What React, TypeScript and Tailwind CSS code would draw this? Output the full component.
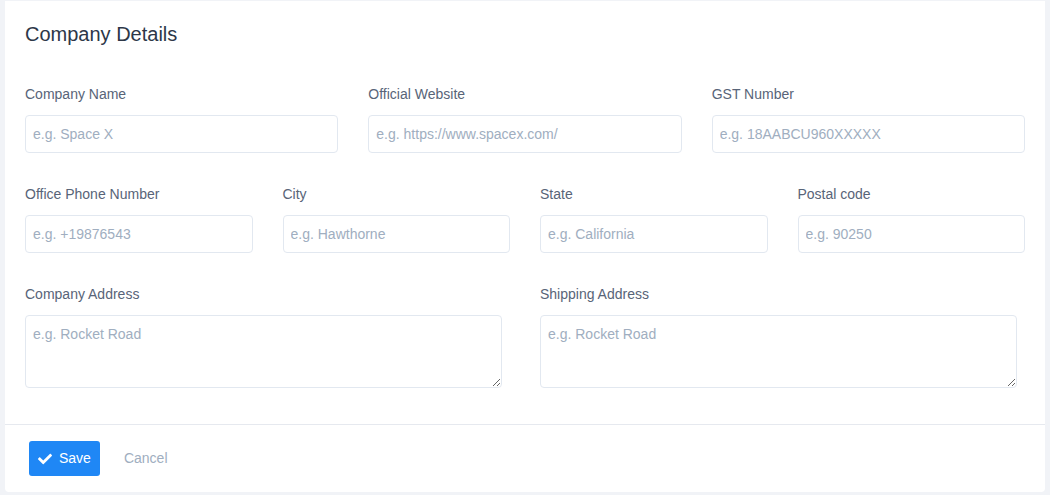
import { FaCheck } from "react-icons/fa";

const inputCls =
  "block h-[38px] w-full rounded-[4px] border border-[#e2e8f0] bg-white px-[7px] text-[14px] text-[#2d3748] placeholder:text-[#a0aec0] outline-none";

function Field({ label, placeholder }: { label: string; placeholder: string }) {
  return (
    <div>
      <label className="mb-[10px] block text-[14px] leading-[21px] text-[#586478]">{label}</label>
      <input className={inputCls} placeholder={placeholder} />
    </div>
  );
}

function AreaField({ label, placeholder }: { label: string; placeholder: string }) {
  return (
    <div>
      <label className="mb-[10px] block text-[14px] leading-[21px] text-[#586478]">{label}</label>
      <textarea
        className="block h-[73px] w-[calc(100%-8px)] rounded-[4px] border border-[#e2e8f0] bg-white px-[7px] py-[8px] text-[14px] leading-[20px] text-[#2d3748] placeholder:text-[#a0aec0] outline-none"
        placeholder={placeholder}
      />
    </div>
  );
}

export default function App() {
  return (
    <div
      className="h-[495px] w-[1050px] bg-[#f1f3f7] pt-px pl-[5px] pr-[5px]"
      style={{ fontFamily: '"Liberation Sans", Arial, sans-serif' }}
    >
      <div className="h-[491px] rounded-b-[4px] bg-white">
        <div className="px-5 pt-[19px] pb-[36px]">
          <h2 className="text-[20px] leading-[28px] text-[#2d3748]">Company Details</h2>
          <div className="mt-[36px] grid grid-cols-3 gap-x-[30px]">
            <Field label="Company Name" placeholder="e.g. Space X" />
            <Field label="Official Website" placeholder="e.g. https://www.spacex.com/" />
            <Field label="GST Number" placeholder="e.g. 18AABCU960XXXXX" />
          </div>
          <div className="mt-[31px] grid grid-cols-4 gap-x-[30px]">
            <Field label="Office Phone Number" placeholder="e.g. +19876543" />
            <Field label="City" placeholder="e.g. Hawthorne" />
            <Field label="State" placeholder="e.g. California" />
            <Field label="Postal code" placeholder="e.g. 90250" />
          </div>
          <div className="mt-[31px] grid grid-cols-2 gap-x-[30px]">
            <AreaField label="Company Address" placeholder="e.g. Rocket Road" />
            <AreaField label="Shipping Address" placeholder="e.g. Rocket Road" />
          </div>
        </div>
        <div className="flex items-center border-t border-[#e6e9ef] px-6 pt-[16px]">
          <button className="flex h-[35px] items-center gap-[7px] rounded-[3px] bg-[#1f87f5] px-[9px] text-[14px] text-white">
            <FaCheck className="h-[14px] w-[14px]" />
            Save
          </button>
          <button className="ml-[24px] text-[14px] text-[#a0aec0]">Cancel</button>
        </div>
      </div>
    </div>
  );
}
